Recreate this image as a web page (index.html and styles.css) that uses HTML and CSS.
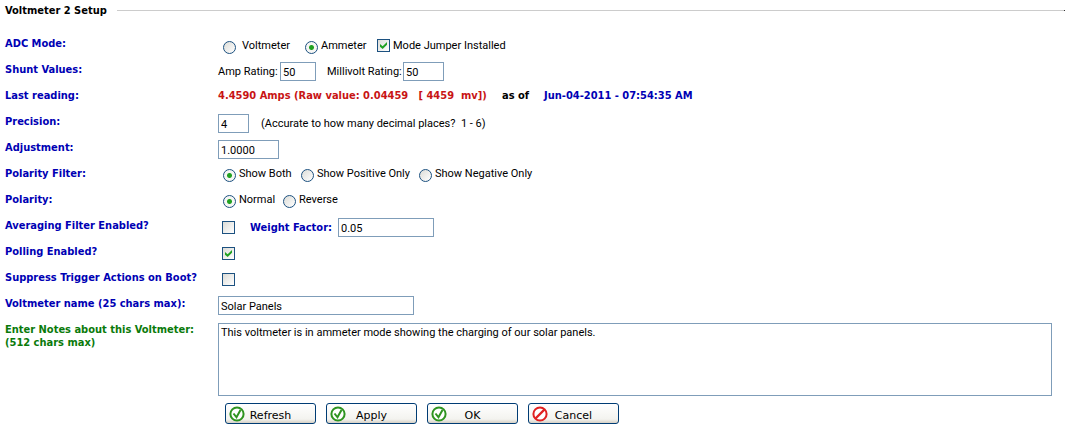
FILE: index.html
```
<!DOCTYPE html>
<html lang="en">
<head>
	<meta charset="utf-8">
	<meta name="viewport" content="width=device-width, initial-scale=1">
	<title>Voltmeter 2 Setup</title>
	<link rel="stylesheet" href="styles.css">
</head>
<body>
	<form class="setup">
		<div class="title">
			<h1>Voltmeter 2 Setup</h1>
			<span class="rule"></span>
		</div>

		<div class="row">
			<span class="name">ADC Mode:</span>
			<div class="field mode">
				<label class="option volt"><input type="radio" name="mode">Voltmeter</label>
				<label class="option amp"><input type="radio" name="mode" checked>Ammeter</label>
				<label class="option"><input type="checkbox" checked>Mode Jumper Installed</label>
			</div>
		</div>
		<div class="row">
			<span class="name">Shunt Values:</span>
			<div class="field">
				<label class="amps" for="amps">Amp Rating:</label>
				<input type="text" class="w-amps" id="amps" value="50">
				<label class="millivolts" for="millivolts">Millivolt Rating:</label>
				<input type="text" class="w-millivolts" id="millivolts" value="50">
			</div>
		</div>
		<div class="row">
			<span class="name">Last reading:</span>
			<div class="field reading">
				<span class="value">4.4590 Amps (Raw value: 0.04459 &nbsp; [ 4459 &nbsp;mv])</span>
				<span class="as-of">as of</span>
				<span class="date">Jun-04-2011 - 07:54:35 AM</span>
			</div>
		</div>
		<div class="row">
			<label class="name" for="precision">Precision:</label>
			<div class="field">
				<input type="text" class="w-precision" id="precision" value="4">
				<span class="hint">(Accurate to how many decimal places?&nbsp; 1 - 6)</span>
			</div>
		</div>
		<div class="row">
			<label class="name" for="adjustment">Adjustment:</label>
			<div class="field">
				<input type="text" class="w-adjustment" id="adjustment" value="1.0000">
			</div>
		</div>
		<div class="row">
			<span class="name">Polarity Filter:</span>
			<div class="field choices">
				<label class="option both"><input type="radio" name="filter" checked>Show Both</label>
				<label class="option positive"><input type="radio" name="filter">Show Positive Only</label>
				<label class="option"><input type="radio" name="filter">Show Negative Only</label>
			</div>
		</div>
		<div class="row">
			<span class="name">Polarity:</span>
			<div class="field choices">
				<label class="option normal"><input type="radio" name="polarity" checked>Normal</label>
				<label class="option"><input type="radio" name="polarity">Reverse</label>
			</div>
		</div>
		<div class="row">
			<label class="name" for="averaging">Averaging Filter Enabled?</label>
			<div class="field">
				<input type="checkbox" class="single" id="averaging">
				<label class="weight" for="weight">Weight Factor:</label>
				<input type="text" class="w-weight" id="weight" value="0.05">
			</div>
		</div>
		<div class="row">
			<label class="name" for="polling">Polling Enabled?</label>
			<div class="field">
				<input type="checkbox" class="single" id="polling" checked>
			</div>
		</div>
		<div class="row">
			<label class="name" for="suppress">Suppress Trigger Actions on Boot?</label>
			<div class="field">
				<input type="checkbox" class="single" id="suppress">
			</div>
		</div>
		<div class="row">
			<label class="name" for="vname">Voltmeter name (25 chars max):</label>
			<div class="field">
				<input type="text" class="w-name" id="vname" maxlength="25" value="Solar Panels">
			</div>
		</div>
		<div class="row notes">
			<label class="name" for="notes">Enter Notes about this Voltmeter:<br>(512 chars max)</label>
			<textarea id="notes" maxlength="512">This voltmeter is in ammeter mode showing the charging of our solar panels.</textarea>
		</div>

		<div class="buttons">
			<button type="button">
				<svg viewBox="0 0 16 16"><circle cx="8" cy="8" r="6.6" fill="#fff" stroke="#2e9420" stroke-width="2"/><path d="M4.5 7.5l3 3.8 4-7.3" fill="none" stroke="#2e9420" stroke-width="2"/></svg>
				<span>Refresh</span>
			</button>
			<button type="button">
				<svg viewBox="0 0 16 16"><circle cx="8" cy="8" r="6.6" fill="#fff" stroke="#2e9420" stroke-width="2"/><path d="M4.5 7.5l3 3.8 4-7.3" fill="none" stroke="#2e9420" stroke-width="2"/></svg>
				<span>Apply</span>
			</button>
			<button type="button">
				<svg viewBox="0 0 16 16"><circle cx="8" cy="8" r="6.6" fill="#fff" stroke="#2e9420" stroke-width="2"/><path d="M4.5 7.5l3 3.8 4-7.3" fill="none" stroke="#2e9420" stroke-width="2"/></svg>
				<span>OK</span>
			</button>
			<button type="button">
				<svg viewBox="0 0 16 16"><circle cx="8" cy="8" r="6.6" fill="#fff" stroke="#e02020" stroke-width="2"/><path d="M3.5 12.5l9-9" fill="none" stroke="#e02020" stroke-width="2.4"/></svg>
				<span>Cancel</span>
			</button>
		</div>
	</form>
</body>
</html>
```
FILE: styles.css
```
* {
	box-sizing: border-box;
}
body {
	margin: 0;
	background: #fff;
	color: #000;
	font: 11px/13px Roboto, sans-serif;
}
.setup {
	padding: 4px 0 4px 5px;
}
.title {
	display: flex;
	align-items: center;
	margin-bottom: 19px;
}
.title h1 {
	margin: 0;
	width: 112px;
	font-size: 11px;
	white-space: nowrap;
}
.title h1, .name, .reading, .weight {
	font-family: Tahoma, "DejaVu Sans Condensed", sans-serif;
	font-weight: bold;
}
.rule {
	flex: 1;
	height: 1px;
	background: #ccc;
	border-right: 1px solid #333;
}
.row {
	display: flex;
	min-height: 26px;
	white-space: nowrap;
}
.name {
	width: 213px;
	padding-top: 1px;
	color: #0000b4;
}
.field {
	display: flex;
	align-items: center;
	height: 19px;
}
input, textarea, button {
	margin: 0;
	font: inherit;
	color: #000;
}
input[type="text"] {
	height: 19px;
	padding: 2px 2px 1px;
	border: 1px solid #7f9db9;
}
.w-amps {
	width: 36px;
}
.w-millivolts {
	width: 41px;
}
.w-precision {
	width: 31px;
}
.w-adjustment {
	width: 61px;
}
.w-weight {
	width: 96px;
}
.w-name {
	width: 196px;
}

/* xp style tick boxes and radios */
input[type="checkbox"], input[type="radio"] {
	appearance: none;
	flex: none;
	width: 13px;
	height: 13px;
	border: 1px solid #1c5180;
	background: linear-gradient(135deg, #dcdcd7, #fff);
}
input[type="radio"] {
	border-radius: 50%;
}
input[type="radio"]:checked {
	background: radial-gradient(circle, #21a121 2px, #f6f6f4 3px);
}
input[type="checkbox"]:checked::before {
	content: "";
	display: block;
	width: 7px;
	height: 7px;
	margin: 2px;
	background: #21a121;
	clip-path: polygon(0 28%, 38% 62%, 100% 0, 100% 40%, 38% 100%, 0 68%);
}
.single {
	margin-left: 4px;
}
.option {
	display: flex;
	gap: 3px;
}
.mode, .choices {
	padding-left: 5px;
}
.choices {
	height: 15px;
}
.mode input[type="radio"], .choices input {
	position: relative;
	top: 2px;
}
.volt {
	width: 82px;
	gap: 6px;
}
.amp {
	width: 72px;
}
.both {
	width: 78px;
}
.positive {
	width: 118px;
}
.normal {
	width: 60px;
}
.amps {
	width: 62px;
}
.millivolts {
	width: 76px;
	margin-left: 11px;
}
.reading {
	height: 15px;
}
.value {
	width: 284px;
	color: #c81414;
}
.as-of {
	width: 42px;
}
.date {
	color: #0000b4;
}
.hint {
	margin-left: 12px;
}
.weight {
	width: 88px;
	margin-left: 15px;
	color: #0000b4;
}
.notes {
	padding-right: 13px;
}
.notes .name {
	color: #0a7a0a;
}
textarea {
	flex: 1;
	height: 73px;
	margin-top: 1px;
	padding: 2px;
	border: 1px solid #7f9db9;
	resize: none;
}
.buttons {
	display: flex;
	gap: 10px;
	margin: 7px 0 0 220px;
}
button {
	display: flex;
	align-items: center;
	width: 91px;
	height: 21px;
	padding: 0 19px 0 3px;
	border: 1px solid #003c74;
	border-radius: 3px;
	background: linear-gradient(#fff, #f3f3ef 80%, #d6d0c5);
	font: 11px/13px Verdana, "DejaVu Sans", sans-serif;
}
button svg {
	flex: none;
	width: 16px;
	height: 16px;
}
button span {
	flex: 1;
	padding-top: 3px;
	text-align: center;
}
```
